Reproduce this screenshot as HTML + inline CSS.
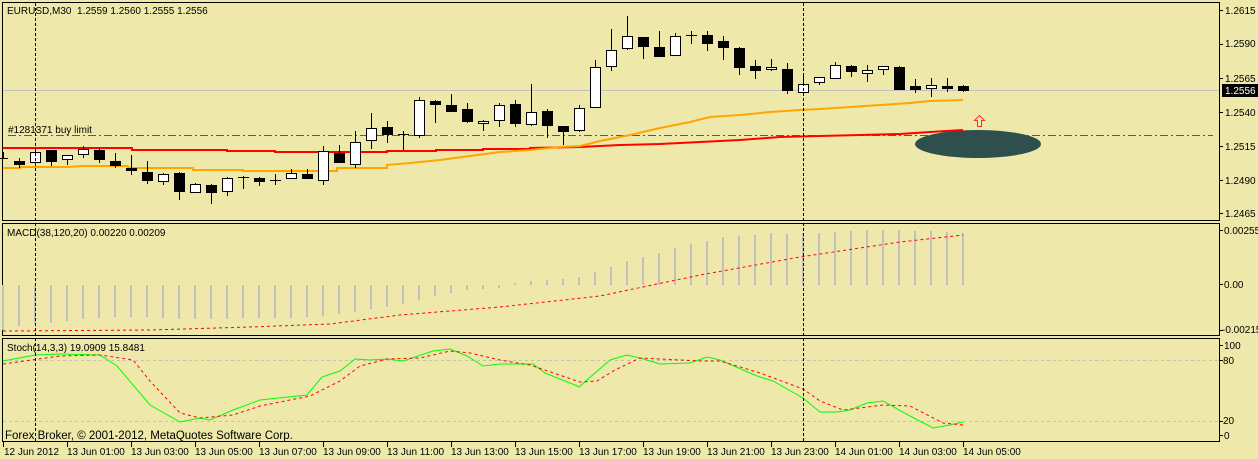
<!DOCTYPE html>
<html><head><meta charset="utf-8"><style>
html,body{margin:0;padding:0;background:#eee8aa;}
svg{display:block;font-family:"Liberation Sans",sans-serif;}
</style></head><body>
<svg width="1258" height="459" viewBox="0 0 1258 459" xmlns="http://www.w3.org/2000/svg">
<rect width="1258" height="459" fill="#eee8aa"/>
<!-- panels -->
<g fill="none" stroke="#000" stroke-width="1">
<rect x="2.5" y="2.5" width="1217" height="218"/>
<rect x="2.5" y="223.5" width="1217" height="112"/>
<rect x="2.5" y="338.5" width="1217" height="103"/>
</g>
<!-- price line -->
<line x1="3" y1="90.5" x2="1219" y2="90.5" stroke="#c0c0c0"/>
<!-- stoch levels -->
<line x1="3" y1="360.5" x2="1219" y2="360.5" stroke="#c0c0c0" stroke-dasharray="3,3"/>
<line x1="3" y1="421.5" x2="1219" y2="421.5" stroke="#c0c0c0" stroke-dasharray="3,3"/>
<!-- buy limit line -->
<line x1="8" y1="135.5" x2="1213" y2="135.5" stroke="#2e7d12" stroke-dasharray="8,3,2,3"/>
<text x="8" y="133" font-size="10" fill="#000">#1281371 buy limit</text>
<!-- ellipse -->
<ellipse cx="978" cy="144" rx="63" ry="14" fill="#2f4f4f"/>
<!-- arrow -->
<path d="M979.5 115.5 L984.5 120.5 L981.5 120.5 L981.5 126.5 L977.5 126.5 L977.5 120.5 L974.5 120.5 Z" fill="none" stroke="#ff3030"/>
<!-- MAs -->
<polyline fill="none" stroke="#ff0000" stroke-width="2" points="3,148 132,148 132,150 227,150 227,151 275,151 275,152 387,152 387,151 436,151 436,150 483,150 483,149 530,149 530,148 580,147 620,145 660,144 700,142 740,140 780,137 820,136 860,135 900,134 930,132 963,130"/>
<polyline fill="none" stroke="#ffa500" stroke-width="2" points="3,168 20,168 20,167 67,167 83,166 127,166 130,168 193,168 193,170 243,170 243,171 337,171 337,168 387,168 387,165 410,163 440,160 470,156 500,152 530,150 560,147 580,146 600,141 630,135 660,128 690,122 710,117 740,115 770,112 800,110 820,109 850,107 880,105 910,103 930,101 963,100"/>
<!-- candles -->
<g stroke="#000" stroke-width="1">
<path d="M3.5 152V158M0 158.5H8"/>
<path d="M19.5 158V168M35.5 150V163M51.5 150V166M67.5 155V165M83.5 146V158M99.5 148V163M115.5 153V168M131.5 155V175M147.5 161V184M163.5 173V185M179.5 172V200M195.5 183V193M211.5 184V204M227.5 177V196M243.5 176V189M259.5 177V186M275.5 174V185M291.5 169V179M307.5 169V179M323.5 146V185M339.5 145V163M355.5 131V168M371.5 113V149M387.5 121V143M403.5 131V150M419.5 97V138M435.5 100V123M451.5 94V112M467.5 103V123M483.5 120V131M499.5 103V127M515.5 100V127M531.5 84V126M547.5 109V138M563.5 126V145M579.5 105V132M595.5 60V108M611.5 29V71M627.5 16V50M643.5 37V59M659.5 31V56M675.5 33V56M691.5 31V44M707.5 31V51M723.5 36V60M739.5 47V75M755.5 60V79M771.5 59V71M787.5 63V94M803.5 74V92M819.5 77V85M835.5 62V78M851.5 65V77M867.5 65V82M883.5 66V75M899.5 66V89M915.5 79V93M931.5 78V97M947.5 78V92M963.5 85V92"/>
<path d="M238 177.5H249M270 180.5H281M398 134.5H409M686 35.5H697"/>
</g>
<g stroke="#000" stroke-width="1" fill="#000">
<rect x="14.5" y="161.5" width="10" height="3"/>
<rect x="46.5" y="150.5" width="10" height="11"/>
<rect x="94.5" y="150.5" width="10" height="9"/>
<rect x="110.5" y="161.5" width="10" height="4"/>
<rect x="126.5" y="168.5" width="10" height="2"/>
<rect x="142.5" y="172.5" width="10" height="8"/>
<rect x="174.5" y="173.5" width="10" height="18"/>
<rect x="206.5" y="185.5" width="10" height="7"/>
<rect x="254.5" y="178.5" width="10" height="3"/>
<rect x="302.5" y="174.5" width="10" height="4"/>
<rect x="334.5" y="153.5" width="10" height="9"/>
<rect x="382.5" y="127.5" width="10" height="7"/>
<rect x="430.5" y="101.5" width="10" height="3"/>
<rect x="446.5" y="105.5" width="10" height="6"/>
<rect x="462.5" y="109.5" width="10" height="12"/>
<rect x="510.5" y="104.5" width="10" height="19"/>
<rect x="542.5" y="111.5" width="10" height="14"/>
<rect x="558.5" y="126.5" width="10" height="5"/>
<rect x="638.5" y="37.5" width="10" height="9"/>
<rect x="654.5" y="47.5" width="10" height="9"/>
<rect x="702.5" y="35.5" width="10" height="8"/>
<rect x="718.5" y="41.5" width="10" height="6"/>
<rect x="734.5" y="48.5" width="10" height="19"/>
<rect x="750.5" y="66.5" width="10" height="4"/>
<rect x="782.5" y="69.5" width="10" height="21"/>
<rect x="846.5" y="66.5" width="10" height="5"/>
<rect x="894.5" y="67.5" width="10" height="22"/>
<rect x="910.5" y="86.5" width="10" height="3"/>
<rect x="942.5" y="86.5" width="10" height="2"/>
<rect x="958.5" y="86.5" width="10" height="4"/>
</g>
<g stroke="#000" stroke-width="1" fill="#fff">
<rect x="30.5" y="152.5" width="10" height="10"/>
<rect x="62.5" y="155.5" width="10" height="4"/>
<rect x="78.5" y="149.5" width="10" height="5"/>
<rect x="158.5" y="174.5" width="10" height="7"/>
<rect x="190.5" y="184.5" width="10" height="8"/>
<rect x="222.5" y="178.5" width="10" height="13"/>
<rect x="286.5" y="173.5" width="10" height="5"/>
<rect x="318.5" y="151.5" width="10" height="29"/>
<rect x="350.5" y="142.5" width="10" height="22"/>
<rect x="366.5" y="128.5" width="10" height="12"/>
<rect x="414.5" y="100.5" width="10" height="35"/>
<rect x="478.5" y="121.5" width="10" height="2"/>
<rect x="494.5" y="105.5" width="10" height="15"/>
<rect x="526.5" y="112.5" width="10" height="12"/>
<rect x="574.5" y="108.5" width="10" height="22"/>
<rect x="590.5" y="67.5" width="10" height="40"/>
<rect x="606.5" y="50.5" width="10" height="16"/>
<rect x="622.5" y="36.5" width="10" height="12"/>
<rect x="670.5" y="36.5" width="10" height="19"/>
<rect x="766.5" y="67.5" width="10" height="2"/>
<rect x="798.5" y="84.5" width="10" height="8"/>
<rect x="814.5" y="77.5" width="10" height="5"/>
<rect x="830.5" y="65.5" width="10" height="13"/>
<rect x="862.5" y="70.5" width="10" height="3"/>
<rect x="878.5" y="66.5" width="10" height="3"/>
<rect x="926.5" y="85.5" width="10" height="3"/>
</g>
<text x="7" y="14" font-size="10" fill="#000" xml:space="preserve">EURUSD,M30  1.2559 1.2560 1.2555 1.2556</text>
<!-- MACD histogram -->
<path stroke="#c0c0c0" stroke-width="2" fill="none" d="M3 285V330M19 285V326M35 285V324M51 285V323M67 285V321M83 285V319M99 285V318M115 285V317M131 285V317M147 285V317M163 285V318M179 285V319M195 285V319M211 285V319M227 285V319M243 285V318M259 285V318M275 285V318M291 285V318M307 285V317M323 285V316M339 285V314M355 285V312M371 285V309M387 285V307M403 285V304M419 285V300M435 285V296M451 285V293M467 285V290M483 285V289M499 285V288M515 285V283M531 285V281M547 285V280M563 285V279M579 285V277M595 285V272M611 285V267M627 285V261M643 285V257M659 285V253M675 285V248M691 285V244M707 285V241M723 285V237M739 285V236M755 285V235M771 285V233M787 285V234M803 285V233M819 285V233M835 285V232M851 285V231M867 285V230M883 285V230M899 285V230M915 285V231M931 285V231M947 285V232M963 285V233"/>
<polyline fill="none" stroke="#ff0000" stroke-dasharray="3,3" points="3,331 150,330 250,327 330,324 400,315 450,311 500,307 600,296 700,275 800,257 900,242 963,235"/>
<text x="7" y="236" font-size="10" fill="#000">MACD(38,120,20) 0.00220 0.00209</text>
<!-- Stoch -->
<polyline fill="none" stroke="#00ff00" stroke-width="1" points="3,361 35,355 60,354 100,355 117,366 150,405 180,422 200,418 210,420 233,410 260,400 307,395 322,377 340,371 355,359 370,360 387,359 403,361 433,351 450,349 467,356 483,366 500,364 533,364 545,373 575,385 579,387 610,360 627,355 640,358 660,364 690,363 707,357 720,360 757,376 773,381 803,398 820,412 837,412 850,410 867,403 883,401 910,416 933,428 950,425 963,422"/>
<polyline fill="none" stroke="#ff0000" stroke-dasharray="3,3" points="3,364 60,356 100,355 133,360 150,381 180,413 200,418 233,415 260,406 310,396 340,381 360,366 387,359 420,358 450,351 470,353 500,360 530,365 580,382 597,381 615,370 640,358 700,361 720,361 760,373 803,389 820,401 843,410 883,405 910,406 943,423 963,425"/>
<text x="7" y="351" font-size="10" fill="#000">Stoch(14,3,3) 19.0909 15.8481</text>
<text x="5" y="439" font-size="11.5" fill="#000">Forex Broker, © 2001-2012, MetaQuotes Software Corp.</text>
<!-- vertical dashed -->
<line x1="35.5" y1="3" x2="35.5" y2="441" stroke="#000" stroke-dasharray="3,2"/>
<line x1="803.5" y1="3" x2="803.5" y2="441" stroke="#000" stroke-dasharray="3,2"/>
<!-- right axis -->
<g font-size="10" fill="#000">
<path stroke="#000" d="M1220 10.5h3M1220 44.5h3M1220 78.5h3M1220 112.5h3M1220 146.5h3M1220 180.5h3M1220 213.5h3M1220 230.5h3M1220 284.5h3M1220 330.5h3M1220 345.5h3M1220 360.5h3M1220 421.5h3M1220 435.5h3"/>
<text x="1225" y="14">1.2615</text>
<text x="1225" y="47">1.2590</text>
<text x="1225" y="82">1.2565</text>
<rect x="1222" y="84" width="36" height="13" fill="#000"/>
<text x="1225" y="94" fill="#fff">1.2556</text>
<text x="1225" y="116">1.2540</text>
<text x="1225" y="150">1.2515</text>
<text x="1225" y="184">1.2490</text>
<text x="1225" y="217">1.2465</text>
<text x="1224" y="234">0.00255</text>
<text x="1224" y="288">0.00</text>
<text x="1222" y="333">-0.00215</text>
<text x="1224" y="349">100</text>
<text x="1223" y="364">80</text>
<text x="1223" y="424">20</text>
<text x="1224" y="439">0</text>
</g>
<!-- time axis -->
<path stroke="#000" d="M3.5 442v5M67.5 442v5M131.5 442v5M195.5 442v5M259.5 442v5M323.5 442v5M387.5 442v5M451.5 442v5M515.5 442v5M579.5 442v5M643.5 442v5M707.5 442v5M771.5 442v5M835.5 442v5M899.5 442v5M963.5 442v5"/>
<g font-size="10" fill="#000">
<text x="4" y="455">12 Jun 2012</text>
<text x="67" y="455">13 Jun 01:00</text>
<text x="131" y="455">13 Jun 03:00</text>
<text x="195" y="455">13 Jun 05:00</text>
<text x="259" y="455">13 Jun 07:00</text>
<text x="323" y="455">13 Jun 09:00</text>
<text x="387" y="455">13 Jun 11:00</text>
<text x="451" y="455">13 Jun 13:00</text>
<text x="515" y="455">13 Jun 15:00</text>
<text x="579" y="455">13 Jun 17:00</text>
<text x="643" y="455">13 Jun 19:00</text>
<text x="707" y="455">13 Jun 21:00</text>
<text x="771" y="455">13 Jun 23:00</text>
<text x="835" y="455">14 Jun 01:00</text>
<text x="899" y="455">14 Jun 03:00</text>
<text x="963" y="455">14 Jun 05:00</text>
</g>
</svg>
</body></html>
